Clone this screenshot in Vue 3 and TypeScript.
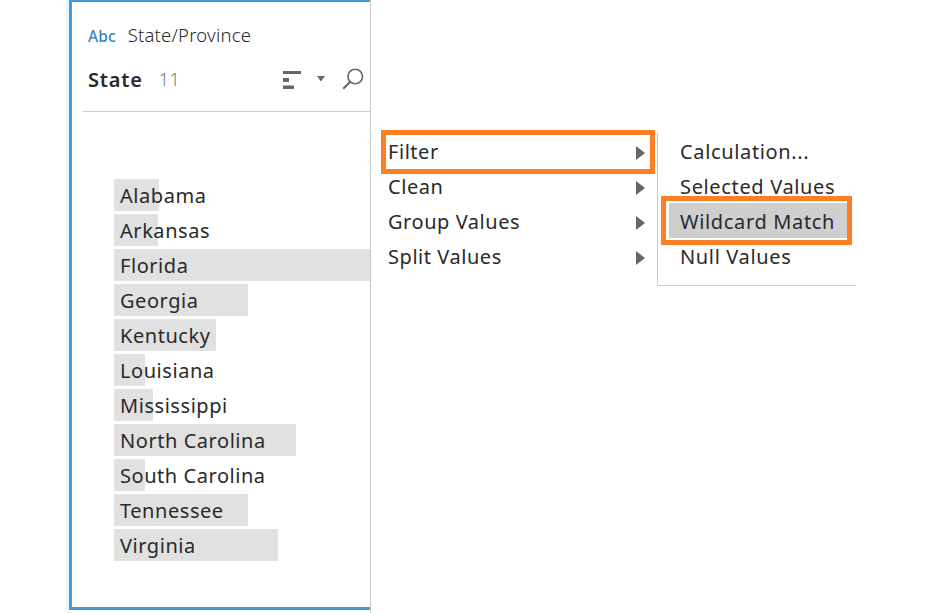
<script setup lang="ts">
interface StateRow {
  name: string
  width: number
}

const states: StateRow[] = [
  { name: 'Alabama', width: 45 },
  { name: 'Arkansas', width: 44 },
  { name: 'Florida', width: 256 },
  { name: 'Georgia', width: 134 },
  { name: 'Kentucky', width: 102 },
  { name: 'Louisiana', width: 31 },
  { name: 'Mississippi', width: 39 },
  { name: 'North Carolina', width: 182 },
  { name: 'South Carolina', width: 31 },
  { name: 'Tennessee', width: 134 },
  { name: 'Virginia', width: 164 },
]

const menu: string[] = ['Filter', 'Clean', 'Group Values', 'Split Values']
const submenu: string[] = ['Calculation...', 'Selected Values', 'Wildcard Match', 'Null Values']
</script>

<template>
  <main class="page">
    <section class="profile">
      <div class="card">
        <div class="source">
          <span class="type">Abc</span>
          <span class="origin">State/Province</span>
        </div>
        <header class="head">
          <h1 class="title">State</h1>
          <span class="count">{{ states.length }}</span>
          <svg class="sort" width="18" height="18" viewBox="0 0 18 18">
            <path d="M0 0h18v3H0zM0 7h6v4H0zM0 14.4h11v3.6H0z" fill="#666" />
          </svg>
          <svg class="caret" width="8" height="6" viewBox="0 0 8 6">
            <path d="M0 0h8L4 5.6z" fill="#666" />
          </svg>
          <svg class="search" width="22" height="22" viewBox="0 0 22 22">
            <circle cx="13.2" cy="8.5" r="7.3" fill="none" stroke="#666" stroke-width="1.6" />
            <path d="M8 14L1.2 20.8" stroke="#666" stroke-width="2.2" />
          </svg>
        </header>
        <ul class="values">
          <li v-for="s in states" :key="s.name" class="value">
            <div class="bar" :style="{ width: s.width + 'px' }"><span class="label">{{ s.name }}</span></div>
          </li>
        </ul>
      </div>
    </section>

    <nav class="menu">
      <div v-for="item in menu" :key="item" class="item">
        <span>{{ item }}</span>
        <svg width="9" height="14" viewBox="0 0 9 14"><path d="M0 0L9 7L0 14z" fill="#666" /></svg>
      </div>
      <div class="callout callout-filter"></div>
    </nav>

    <nav class="submenu">
      <div
        v-for="item in submenu"
        :key="item"
        class="subitem"
        :class="{ active: item === 'Wildcard Match' }"
      >{{ item }}</div>
      <div class="callout callout-wildcard"></div>
    </nav>
  </main>
</template>

<style>
body {
  background: #fff;
}
</style>

<style scoped>
.page {
  display: flex;
  align-items: flex-start;
  box-sizing: border-box;
  width: 926px;
  height: 613px;
  padding-left: 66px;
  overflow: hidden;
  background: #fff;
  color: #2a2a2a;
  font-family: "Noto Sans", "Open Sans", sans-serif;
  font-size: 20px;
  letter-spacing: 0.55px;
  white-space: nowrap;
}
.profile {
  box-sizing: border-box;
  width: 305px;
  height: 613px;
  border-left: 3px solid #f1f1f1;
  border-right: 1px solid #ccc;
}
.card {
  box-sizing: border-box;
  height: 610px;
  border: solid #419bdc;
  border-width: 2px 0 3px 3px;
}
.source {
  display: flex;
  align-items: baseline;
  gap: 12px;
  padding: 20px 0 0 16px;
  line-height: 26px;
}
.type {
  color: #3b86bd;
  font-size: 15.5px;
  font-weight: 500;
  letter-spacing: 0.1px;
}
.origin {
  font-size: 18.5px;
  font-weight: 300;
  letter-spacing: 0.2px;
}
.head {
  display: flex;
  align-items: center;
  box-sizing: border-box;
  height: 64px;
  margin: -1px 0 0 11px;
  padding: 0 6px 2px 5px;
  border-bottom: 1px solid #ccc;
}
.title {
  margin: 2px 0 0;
  font-size: 20px;
  font-weight: 600;
  line-height: 28px;
  letter-spacing: 0.8px;
}
.count {
  margin-left: 16px;
  color: #777;
  font-size: 18px;
  font-weight: 300;
  line-height: 26px;
}
.sort {
  margin: 2px 0 0 auto;
}
.caret {
  margin-left: 16px;
}
.search {
  margin-left: 17px;
}
.values {
  display: grid;
  gap: 3px;
  margin: 67px 0 0 42px;
  padding: 0;
  list-style: none;
}
.value {
  height: 32px;
}
.bar {
  height: 32px;
  background: #e1e1e1;
}
.label {
  display: block;
  padding-left: 6px;
  line-height: 33px;
}
.menu {
  position: relative;
  box-sizing: border-box;
  width: 286px;
  padding: 134px 12px 0 17px;
}
.item {
  display: flex;
  align-items: center;
  justify-content: space-between;
  height: 35px;
}
.item svg {
  margin-top: 3px;
}
.submenu {
  position: relative;
  box-sizing: border-box;
  width: 199px;
  height: 153px;
  margin-top: 133px;
  padding: 0 9px 0 11px;
  border: solid #ccc;
  border-width: 0 0 1px 1px;
}
.subitem {
  height: 35px;
  padding-left: 11px;
  line-height: 38px;
  letter-spacing: 0.65px;
}
.active {
  background: #cfcfcf;
}
.callout {
  position: absolute;
  box-sizing: border-box;
  border: 5px solid #ff7f27;
}
.callout-filter {
  top: 130px;
  left: 10px;
  width: 274px;
  height: 44px;
}
.callout-wildcard {
  top: 63px;
  left: 3px;
  width: 191px;
  height: 49px;
}
</style>
